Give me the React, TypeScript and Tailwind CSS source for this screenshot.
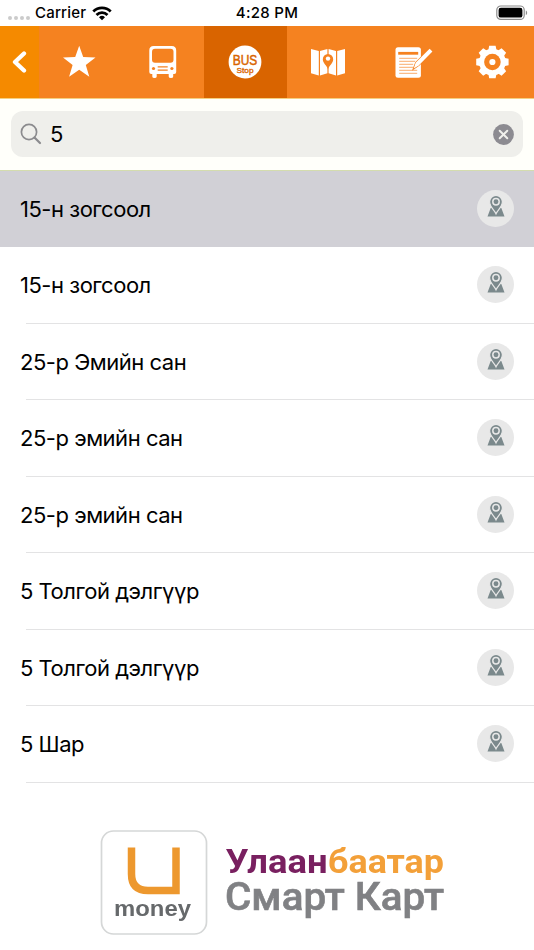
import { useState } from "react";

const stops = [
  { id: 1, name: "15-н зогсоол" },
  { id: 2, name: "15-н зогсоол" },
  { id: 3, name: "25-р Эмийн сан" },
  { id: 4, name: "25-р эмийн сан" },
  { id: 5, name: "25-р эмийн сан" },
  { id: 6, name: "5 Толгой дэлгүүр" },
  { id: 7, name: "5 Толгой дэлгүүр" },
  { id: 8, name: "5 Шар" },
];

function StatusBar() {
  return (
    <div className="h-[26px] grid grid-cols-3 items-center text-[15px] leading-[26px] font-medium text-black">
      <div className="flex items-center pl-2">
        <div className="flex gap-[2px] mt-[9px]">
          {[0, 1, 2, 3].map((dot) => (
            <span key={dot} className="size-1 rounded-full bg-[#cbcbcb]" />
          ))}
        </div>
        <span className="ml-[5px] tracking-[0.2px]">Carrier</span>
        <svg className="ml-[6px]" width="20" height="15" viewBox="0 0 20 15" fill="none" stroke="#000" strokeWidth="2.8">
          <path d="M1.3 5.4a12.4 12.4 0 0 1 17.4 0" />
          <path d="M4.5 8.9a7.8 7.8 0 0 1 11 0" />
          <path d="M10 14.3l-3-3a4.3 4.3 0 0 1 6 0z" fill="#000" stroke="none" />
        </svg>
      </div>
      <div className="text-center tracking-[0.3px]">4:28 PM</div>
      <div className="flex justify-end pr-[6px]">
        <svg width="32" height="16" viewBox="0 0 32 16">
          <rect x="0.8" y="1" width="27.4" height="13.4" rx="4" fill="none" stroke="#8c8c8c" strokeWidth="1.2" />
          <rect x="2.6" y="2.8" width="23.8" height="9.8" rx="2.2" fill="#000" />
          <path d="M29.8 5.4c1.8.7 1.8 4 0 4.7z" fill="#8c8c8c" />
        </svg>
      </div>
    </div>
  );
}

function StarIcon() {
  return (
    <svg width="34" height="34" viewBox="0.8 0 34 34" fill="#fff">
      <path d="M17 .8l4 11.3 12.3.3-9.7 7.5 3.5 11.9L17 24.8 6.9 31.8l3.5-11.9L.7 12.4l12.3-.3z" />
    </svg>
  );
}

function BusIcon() {
  return (
    <svg width="34" height="34" viewBox="0.3 0 34 34">
      <path d="M8 1h18q4.5 0 4.5 4.500V27q0 2-2 2h-1v2.500q0 1.500-2.200 1.500T23 31.500V29H11v2.500q0 1.500-2.200 1.500t-2.200-1.500V29h-1q-2 0-2-2V5.500Q3.500 1 8 1z" fill="#fff" />
      <rect x="6.300" y="3.800" width="21.500" height="14" rx="3" fill="#f58220" />
      <g fill="#f58220">
        <circle cx="7.800" cy="23.500" r="1.600" />
        <circle cx="26.200" cy="23.500" r="1.600" />
        <path d="M12 21.300h10v1.200H12zM12 24.600h10v1.200H12z" />
      </g>
    </svg>
  );
}

function BusStopIcon() {
  return (
    <svg width="34" height="34" viewBox="0 0 34 34">
      <circle cx="17" cy="17" r="16.400" fill="#fff" />
      <g fill="#d96400" textAnchor="middle">
        <text x="17" y="19.600" fontSize="14.500" textLength="24.500" lengthAdjust="spacingAndGlyphs" className="font-['Liberation_Sans',sans-serif]" stroke="#d96400" strokeWidth=".5">BUS</text>
        <text x="17" y="27.800" fontSize="7.500" textLength="17" lengthAdjust="spacingAndGlyphs" className="font-['Liberation_Sans',sans-serif]" stroke="#d96400" strokeWidth=".3">Stop</text>
      </g>
    </svg>
  );
}

function MapIcon() {
  return (
    <svg width="36" height="34" viewBox="0 0 36 34">
      <path d="M1 4l7.800 2v24.500L1 28.300zM10 6l7.400-2v24.300L10 30.500zM18.600 4L26 6v24.500l-7.400-2.200zM27.200 6L35 4v24.300l-7.800 2.200z" fill="#fff" />
      <path d="M18 24.500c-1-4-5.200-6-5.200-10.200a5.200 5.200 0 0 1 10.400 0c0 4.200-4.200 6.200-5.200 10.200z" fill="#f58220" />
      <circle cx="18" cy="13.600" r="2.200" fill="#fff" />
    </svg>
  );
}

function NoteIcon() {
  return (
    <svg width="40" height="34" viewBox="-0.7 0 40 34" className="ml-[5px]">
      <rect x="1.800" y="2.300" width="25.400" height="30.500" rx="2.500" fill="#fff" />
      <path d="M4.500 6.900h20v2.800H4.500z" fill="#f58220" />
      <path d="M5.500 13.300h18M5.500 16.300h16M5.500 19.300h14M5.500 22.300h14M5.500 25.300h18M5.500 28.300h18" stroke="#f9ac6c" strokeWidth="1" />
      <path d="M19.600 24l2.500-6.500L35.900 3.900l2.600 2.600-13.300 13.800z" fill="#fff" stroke="#f58220" strokeWidth="1.300" />
      <path d="M22 17.700L35.900 3.800l2.800 2.800-13.700 13.800-5 3z" fill="#fff" />
    </svg>
  );
}

function GearIcon() {
  return (
    <svg width="34" height="34" viewBox="0.6 0 34 34">
      <g fill="#fff">
        <circle cx="17" cy="17" r="13.300" />
        {[0, 45, 90, 135].map((angle) => (
          <path key={angle} d="M13.800.8h6.400l1 5v22.400l-1 5h-6.400l-1-5V5.800z" transform={`rotate(${angle} 17 17)`} />
        ))}
      </g>
      <circle cx="17" cy="17" r="8.300" fill="#f58220" />
      <circle cx="17" cy="17" r="3.100" fill="#fff" />
    </svg>
  );
}

const tabs = [
  { id: "favorites", icon: StarIcon },
  { id: "bus", icon: BusIcon },
  { id: "stop", icon: BusStopIcon },
  { id: "map", icon: MapIcon },
  { id: "notes", icon: NoteIcon },
  { id: "settings", icon: GearIcon },
];

function StopPin() {
  return (
    <span className="size-[37px] rounded-full bg-[#e8e8e8] flex items-center justify-center">
      <svg width="20" height="24" viewBox="0 0 20 24" className="mb-[5px]">
        <path d="M1.500 22.600L4.700 14h10.600l3.200 8.600z" fill="#7b898c" />
        <path d="M10 19.800c-1.300-3.500-6.400-6.800-6.400-12a6.400 6.400 0 0 1 12.800 0c0 5.200-5.100 8.500-6.400 12z" fill="#7b898c" stroke="#e8e8e8" strokeWidth="1.200" />
        <circle cx="10" cy="7.700" r="3.200" fill="#7b898c" stroke="#e8e8e8" strokeWidth="1.500" />
      </svg>
    </span>
  );
}

function Banner() {
  return (
    <div className="flex justify-center pt-[45px]">
      <svg width="354" height="112" viewBox="0 0 354 112" className="blur-[0.6px]">
        <rect x="11.500" y="3" width="105" height="103" rx="12" fill="#fff" stroke="#d5d7d7" strokeWidth="1.700" />
        <path d="M41.500 19.500V46q0 16.500 16.500 16.500h28V19.500" fill="none" stroke="#ed982e" strokeWidth="7.500" />
        <text x="24" y="87.500" fontSize="22.500" fill="#66696b" textLength="77" lengthAdjust="spacingAndGlyphs" className="font-['Liberation_Sans',sans-serif] font-bold">money</text>
        <g className="font-['Roboto',sans-serif]">
          <text x="135.500" y="44.500" fontSize="33" fill="#792060" textLength="102" lengthAdjust="spacingAndGlyphs" className="font-bold">Улаан</text>
          <text x="238" y="44.500" fontSize="33" fill="#f3a039" textLength="116" lengthAdjust="spacingAndGlyphs" className="font-bold">баатар</text>
          <text x="135" y="81.500" fontSize="38" fill="#808184" stroke="#808184" strokeWidth=".6" textLength="219" lengthAdjust="spacingAndGlyphs" className="font-medium">Смарт Карт</text>
        </g>
      </svg>
    </div>
  );
}

export default function App() {
  const [query, setQuery] = useState("5");
  const [activeTab, setActiveTab] = useState("stop");

  return (
    <div className="w-[534px] h-[950px] overflow-hidden bg-white font-['Inter',sans-serif] text-black">
      <StatusBar />
      <nav className="flex h-[72px] bg-[#f58220]">
        <button className="w-[39px] shrink-0 bg-[#f58a00] flex items-center justify-center">
          <svg width="16" height="24" viewBox="0.5 0 16 24" fill="none" stroke="#fff" strokeWidth="4.3" strokeLinecap="round" strokeLinejoin="round">
            <path d="M12.5 3.500L3.500 12l9 8.500" />
          </svg>
        </button>
        {tabs.map(({ id, icon: Icon }) => (
          <button
            key={id}
            onClick={() => setActiveTab(id)}
            className={`flex-1 flex items-center justify-center ${activeTab === id ? "bg-[#d96400]" : ""}`}
          >
            <Icon />
          </button>
        ))}
      </nav>
      <div className="h-[72.5px] bg-[#fffffa] border-t border-b border-t-[#f5d080] border-b-[#d4dcae] px-[11px] pt-[12px]">
        <div className="h-[46px] rounded-[12px] bg-[#efefeb] flex items-center px-[9px]">
          <svg width="22" height="22" viewBox="0 0 22 22" fill="none" stroke="#8b8b8e">
            <circle cx="9" cy="9" r="7.600" strokeWidth="1.700" />
            <path d="M14.500 14.500l5.500 5.500" strokeWidth="2.200" strokeLinecap="round" />
          </svg>
          <input
            value={query}
            onChange={(e) => setQuery(e.target.value)}
            className="ml-[8px] flex-1 min-w-0 bg-transparent text-[22px] outline-none"
          />
          <button onClick={() => setQuery("")}>
            <svg width="21" height="21" viewBox="0 0 21 21">
              <circle cx="10.500" cy="10.500" r="10.400" fill="#8c8b91" />
              <path d="M6.700 6.700l7.600 7.600M14.300 6.700l-7.600 7.600" stroke="#f0f0ec" strokeWidth="2" strokeLinecap="round" />
            </svg>
          </button>
        </div>
      </div>
      <ul>
        {stops.map((stop, index) => (
          <li key={stop.id} className={index === 0 ? "bg-[#d1d0d6]" : ""}>
            <div className="h-[75.5px] flex items-center justify-between pl-5 pr-5">
              <span className="text-[22px] leading-7 pt-px tracking-[-0.48px]">{stop.name}</span>
              <StopPin />
            </div>
            <div className={`h-px ${index === 0 ? "" : "ml-[26px] bg-[#e3e3e4]"}`} />
          </li>
        ))}
      </ul>
      <Banner />
    </div>
  );
}
